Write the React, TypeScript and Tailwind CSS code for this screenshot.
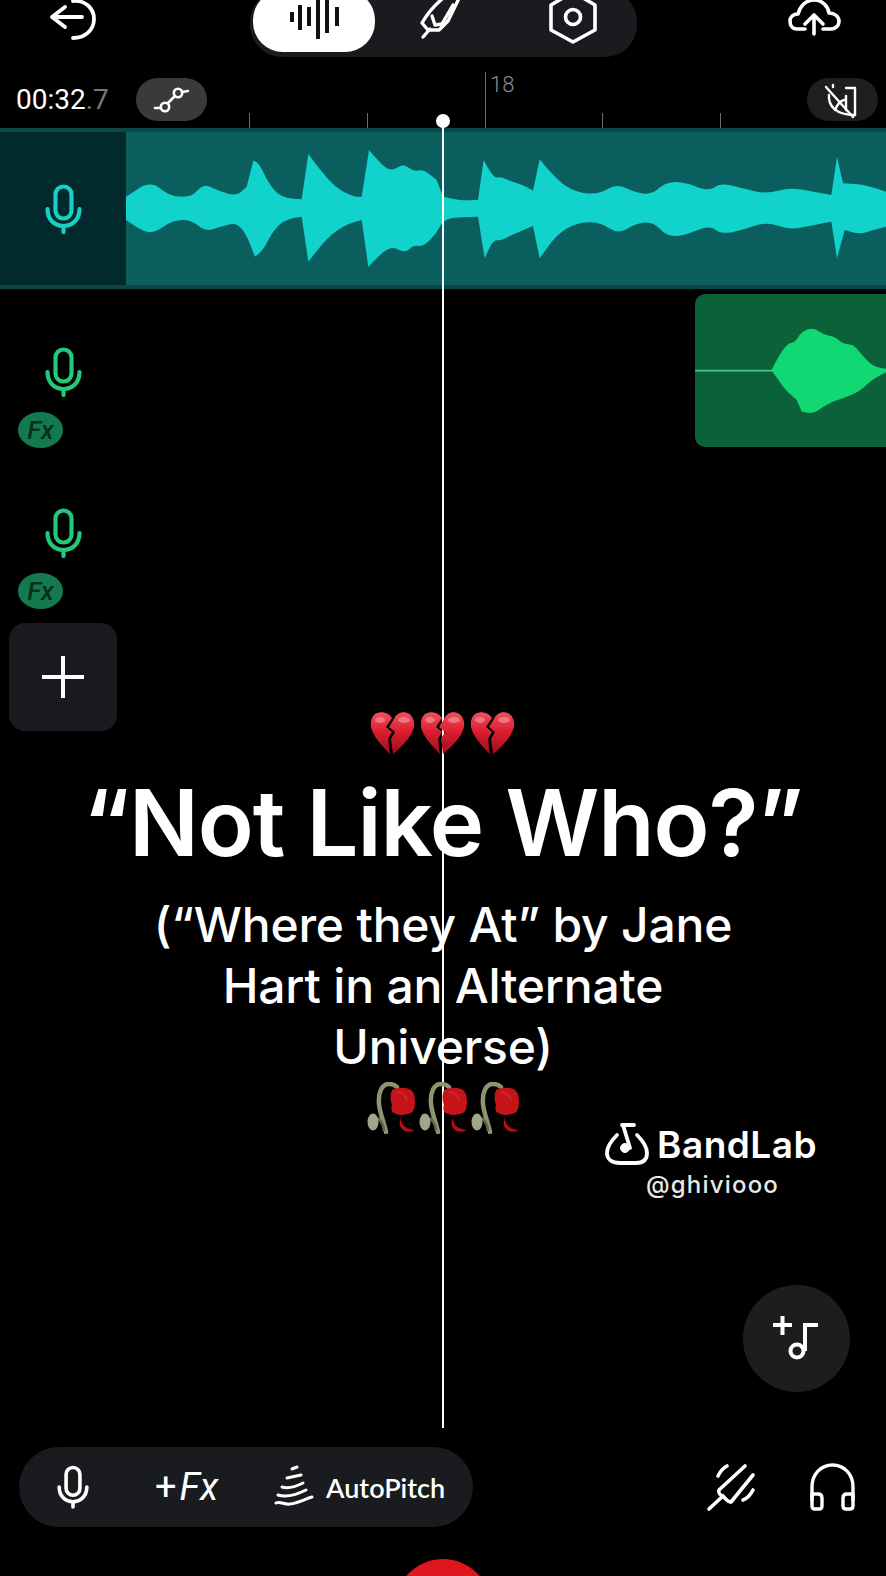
const wave1Top = [[378,590],[410,570],[430,555],[465,552],[490,575],[525,590],[575,590],[600,562],[620,555],[660,575],[710,588],[740,560],[760,482],[775,485],[800,540],[830,580],[860,595],[905,598],[925,462],[960,510],[1010,565],[1060,590],[1085,590],[1107,450],[1140,490],[1175,515],[1210,490],[1240,515],[1270,508],[1310,540],[1329,590],[1379,602],[1434,600],[1451,480],[1479,535],[1504,530],[1534,545],[1569,555],[1599,572],[1619,478],[1669,540],[1729,578],[1799,583],[1849,550],[1909,580],[1959,582],[1994,548],[2049,545],[2129,575],[2159,548],[2229,565],[2299,582],[2369,562],[2439,575],[2494,585],[2511,470],[2529,550],[2579,552],[2619,562],[2658,575]];
const wave1Bottom = [[378,660],[430,695],[465,698],[520,660],[575,660],[615,695],[660,680],[720,665],[745,720],[765,770],[790,750],[820,690],[860,655],[905,650],[925,785],[980,715],[1040,670],[1085,660],[1105,800],[1170,735],[1215,760],[1240,735],[1270,740],[1310,700],[1329,660],[1379,650],[1434,650],[1454,775],[1479,720],[1504,722],[1534,705],[1599,678],[1619,775],[1669,705],[1729,668],[1799,665],[1854,703],[1909,670],[1959,665],[1999,708],[2049,708],[2129,675],[2164,703],[2229,690],[2299,665],[2369,690],[2439,675],[2494,665],[2511,775],[2534,690],[2579,703],[2619,690],[2658,680]];
const wave2Top = [[275,255],[300,205],[325,175],[345,172],[365,140],[400,127],[430,150],[465,155],[490,178],[520,178],[550,215],[580,245],[618,252]];
const wave2Bottom = [[275,258],[295,285],[320,320],[350,345],[365,380],[400,388],[430,365],[460,350],[490,340],[540,320],[580,280],[618,262]];

// smooth the outline, but keep the transient spikes sharp
const smoothEdge = (pts: number[][], dir: number) => {
  let d = '';
  for (let i = 1; i < pts.length - 1; i++) {
    const [x, y] = pts[i];
    const [nx, ny] = pts[i + 1];
    const [px, py] = pts[i - 1];
    const spike = Math.abs(y - py) / Math.max((x - px) * dir, 1) > 2.2 || Math.abs(ny - y) / Math.max((nx - x) * dir, 1) > 2.2;
    d += spike ? `L${x} ${y}` : `Q${x} ${y} ${(x + nx) / 2} ${(y + ny) / 2}`;
  }
  return d;
};

const wavePath = (top: number[][], bottom: number[][]) => {
  const rev = [...bottom].reverse();
  const topEnd = top[top.length - 1];
  const revEnd = rev[rev.length - 1];
  return `M${top[0][0]} ${top[0][1]}${smoothEdge(top, 1)}L${topEnd[0]} ${topEnd[1]}L${rev[0][0]} ${rev[0][1]}${smoothEdge(rev, -1)}L${revEnd[0]} ${revEnd[1]}Z`;
};

const Mic = ({ className }: { className: string }) => (
  <svg viewBox="0 0 37 50" className={className} fill="none" stroke="currentColor" strokeWidth="4.2" strokeLinecap="round">
    <rect x="10.5" y="2.500" width="16" height="32" rx="8" />
    <path d="M2.500 25c0 10 6.500 17 16 17s16-7 16-17" />
    <path d="M18.500 42v6" />
  </svg>
);

const FxChip = () => (
  <div className="ml-[18px] mt-[15px] flex h-[36px] w-[45px] items-center justify-center rounded-[50%] bg-[#147a4e] text-[26px] font-medium italic leading-none text-[#07301e]">
    Fx
  </div>
);

const Tick = ({ className }: { className: string }) => (
  <div className={`h-[15px] w-px self-end bg-[#6b6b6b] ${className}`} />
);

const Heart = () => (
  <svg viewBox="0 0 44 43" className="h-[43px] w-[44px]">
    <defs>
      <linearGradient id="heartFill" x1="0" y1="0" x2="0" y2="1">
        <stop offset="0" stopColor="#f0505f" />
        <stop offset="0.45" stopColor="#dd1f30" />
        <stop offset="1" stopColor="#9c0d1c" />
      </linearGradient>
    </defs>
    <path fill="url(#heartFill)" d="M21 6C18 1 11-1 6 1 1 3-1 9 0 15c2 9 10 18 19 27l-2-15 4-7-6-5z" />
    <path fill="url(#heartFill)" d="M23 7l-5 8 6 5-4 7 2 15c9-7 19-18 21-27 1-7-2-13-8-14.500C30-.5 25 2 23 7z" />
    <ellipse cx="9" cy="8" rx="5" ry="3" fill="#fff" opacity=".3" />
    <ellipse cx="33" cy="8" rx="6" ry="3" fill="#fff" opacity=".3" />
  </svg>
);

const Rose = () => (
  <svg viewBox="0 0 50 52" className="h-[52px] w-[50px]" fill="none">
    <path d="M20 50C18 40 14 32 13 22 12 10 16 2 23 2c4 0 6 1 8 3" stroke="#8b9570" strokeWidth="4.500" strokeLinecap="round" />
    <path d="M12 36c4 4 6 8 6 13" stroke="#5f6a49" strokeWidth="2.500" />
    <ellipse cx="7" cy="40" rx="5.500" ry="8.500" fill="#a2a58b" />
    <path d="M26 8c6-3 14-3 19 0 3 2 4 7 4 12 0 5-1 9-4 11-5 2-12 3-17 0-3-1-3-5-2-8-2-5-2-10 0-15z" fill="#c5131a" />
    <path d="M30 10c6 0 10 3 11 9" stroke="#e0353a" strokeWidth="1.500" opacity=".6" />
    <path d="M35 36c0 6 4 11 13 12-1 2-9 3-12-1-3-3-3-8-1-11z" fill="#b31015" />
  </svg>
);

export default function App() {
  return (
    <div className="relative h-[1576px] w-[886px] overflow-hidden bg-black font-['Roboto',sans-serif] text-white">
      {/* top bar */}
      <div className="flex h-[78px] items-start">
        <svg viewBox="45 0 55 45" className="h-[45px] w-[55px] ml-[45px]" fill="none" stroke="#fff" strokeWidth="3.800" strokeLinecap="round" strokeLinejoin="round">
          <path d="M52 17h30M65 7 52 17l13 10" />
          <path d="M73 1c12-1 21 7 21 18 0 11-9 19-21 19" />
        </svg>
        <div className="ml-[150px] -mt-[10px] flex h-[67px] w-[387px] items-start rounded-[32px] bg-[#1a1b1e]">
          <div className="ml-[3px] h-[62px] w-[122px] rounded-[30px] bg-white">
            <svg viewBox="253 -10 122 62" className="h-[62px] w-[122px]" fill="#111">
              <rect x="290" y="12" width="4" height="10" />
              <rect x="298" y="5" width="4" height="25" />
              <rect x="307" y="7" width="4" height="19" />
              <rect x="316" y="-4" width="4" height="43" />
              <rect x="325" y="-4" width="4" height="37" />
              <rect x="335" y="7" width="4" height="19" />
            </svg>
          </div>
          <svg viewBox="418 -10 50 50" className="ml-[43px] h-[50px] w-[50px]" fill="none" stroke="#fff" strokeWidth="3.400" strokeLinecap="round" strokeLinejoin="round">
            <path d="M423 37l7-8" />
            <path d="M428 30l-6-7c5-9 12-17 20-24l22-11-16 33-9 9z" />
            <path d="M432 16l3 9 7-1" />
            <path d="M442 24l11-19" />
          </svg>
          <svg viewBox="545 -10 56 56" className="ml-[77px] h-[56px] w-[56px]" fill="none" stroke="#fff" strokeWidth="3.600" strokeLinejoin="round">
            <path d="M573-8 595 5v25L573 42 551 30V5z" />
            <circle cx="573" cy="17" r="7.500" />
          </svg>
        </div>
        <svg viewBox="785 0 60 40" className="ml-[148px] h-[40px] w-[60px]" fill="none" stroke="#fff" strokeWidth="3.600" strokeLinecap="round" strokeLinejoin="round">
          <path d="M805 29h-8c-5 0-7-4-7-8s3-7 8-7c2-8 8-14 16-14s14 6 15 13c6 0 10 4 10 8 0 5-4 8-8 8h-8" />
          <path d="M814 34V15M805 24l9-9 9 9" />
        </svg>
      </div>

      {/* ruler */}
      <div className="flex h-[50px] items-start pl-[16px]">
        <div className="flex h-[43px] w-[120px] items-center text-[28px] leading-none">
          00:32<span className="text-[#777]">.7</span>
        </div>
        <div className="h-[43px] w-[71px] rounded-[22px] bg-[#3a3a3c]">
          <svg viewBox="136 78 71 43" className="h-[43px] w-[71px]" fill="none" stroke="#fff" strokeWidth="2.600" strokeLinecap="round">
            <circle cx="165" cy="107" r="4.200" />
            <circle cx="178" cy="93" r="4.200" />
            <path d="M155 108h5M168 103l7-7M182 92l6-1" />
          </svg>
        </div>
        <Tick className="ml-[42px]" />
        <Tick className="ml-[117px]" />
        <div className="relative ml-[117px] h-[56px] w-px self-end bg-[#6b6b6b]">
          <span className="absolute left-[5px] top-[1px] text-[22px] font-light leading-[24px] text-[#8a8a8a]">18</span>
        </div>
        <Tick className="ml-[116px]" />
        <Tick className="ml-[117px]" />
        <div className="ml-[86px] h-[43px] w-[71px] rounded-[22px] bg-[#1e1f21]">
          <svg viewBox="807 78 71 43" className="h-[43px] w-[71px]" fill="none" stroke="#fff" strokeWidth="2.400" strokeLinecap="round">
            <path d="M826 87l27 30" />
            <path d="M829 95c-1 11 7 20 26 20" />
            <path d="M855 88v27M846 88h9M846 96v14M833 85v2" />
            <path d="M835 110c2-5 5-9 9-10" />
          </svg>
        </div>
      </div>

      {/* vocal track */}
      <div className="flex h-[161px] border-y-4 border-y-[#0a4746]">
        <div className="flex w-[126px] justify-center bg-[#02292b] pt-[52px]">
          <Mic className="h-[50px] w-[37px] text-[#17cfc4]" />
        </div>
        <div className="flex-1 bg-[#0a5f5e]">
          <svg viewBox="378 396 2280 459" preserveAspectRatio="none" className="h-full w-full">
            <path d={wavePath(wave1Top, wave1Bottom)} fill="#11d3cb" />
          </svg>
        </div>
      </div>

      {/* second track */}
      <div className="flex h-[160px]">
        <div className="w-[126px]">
          <div className="flex w-[126px] justify-center pt-[58px]">
            <Mic className="h-[50px] w-[37px] text-[#22c978]" />
          </div>
          <FxChip />
        </div>
        <div className="ml-auto mt-[5px] h-[153px] w-[191px] overflow-hidden rounded-l-[10px] bg-[#0b6138]">
          <svg viewBox="45 27 573 460" preserveAspectRatio="none" className="h-full w-full">
            <rect x="45" y="255" width="235" height="5" fill="#46c98a" />
            <path d={wavePath(wave2Top, wave2Bottom)} fill="#12d873" />
          </svg>
        </div>
      </div>

      {/* third track */}
      <div className="h-[158px] w-[126px]">
        <div className="flex w-[126px] justify-center pt-[59px]">
          <Mic className="h-[50px] w-[37px] text-[#22c978]" />
        </div>
        <FxChip />
      </div>

      <div className="ml-[9px] mt-[16px] flex h-[108px] w-[108px] items-center justify-center rounded-[16px] bg-[#1a1b1e]">
        <svg viewBox="0 0 42 42" className="h-[42px] w-[42px]" stroke="#fff" strokeWidth="4">
          <path d="M0 21h42M21 0v42" />
        </svg>
      </div>

      {/* add instrument */}
      <div className="ml-[743px] mt-[554px] flex h-[107px] w-[107px] items-center justify-center rounded-full bg-[#1c1d1f]">
        <svg viewBox="773 1316 47 46" className="h-[46px] w-[47px]" fill="none" stroke="#fff" strokeWidth="4">
          <path d="M773 1325h19M782.500 1316v19" />
          <path d="M805 1351v-26h13" />
          <circle cx="797" cy="1351" r="6.500" />
        </svg>
      </div>

      {/* bottom controls */}
      <div className="mt-[55px] flex h-[80px] items-center">
        <div className="ml-[19px] flex h-[80px] w-[454px] items-center rounded-[40px] bg-[#1a1b1e]">
          <Mic className="ml-[38px] h-[44px] w-[32px] text-white" />
          <div className="ml-[66px] flex w-[66px] items-baseline text-[38px] leading-none">
            <span>+</span>
            <span className="ml-[3px] italic">Fx</span>
          </div>
          <svg viewBox="273 1466 40 44" className="ml-[53px] h-[44px] w-[40px]" fill="none" stroke="#fff" strokeWidth="3" strokeLinecap="round">
            <path d="M291 1470l5-2" />
            <path d="M286 1479l14-3" />
            <path d="M281 1488c6 2 15-1 21-4" />
            <path d="M277 1496c9 3 20-1 28-5" />
            <path d="M275 1504c4-2 9 2 14 1 8-1 15-5 22-7" />
          </svg>
          <span className="ml-[12px] font-['Lato',sans-serif] text-[27px] font-semibold leading-none">AutoPitch</span>
        </div>
        <svg viewBox="705 1462 55 52" className="ml-[232px] h-[52px] w-[55px]" fill="none" stroke="#fff" strokeWidth="3.600" strokeLinecap="round" strokeLinejoin="round">
          <path d="M709 1510l14-13M719 1491l26-24M731 1503l22-27M719 1491c-1 3 1 5 4 6 2 2 4 6 8 6" />
          <path d="M718 1477c2-4 5-8 9-10M743 1501c5-2 8-6 10-10" />
        </svg>
        <svg viewBox="810 1462 46 48" className="ml-[50px] h-[48px] w-[46px]" fill="none" stroke="#fff" strokeWidth="3.400" strokeLinejoin="round">
          <path d="M812 1500v-14c0-13 9-22 20.500-22s20.500 9 20.500 22v14" />
          <path d="M812 1493h6c3 0 4 2 4 4v8c0 2-1 3-3 3h-4c-2 0-3-1-3-3z" />
          <path d="M853 1493h-6c-3 0-4 2-4 4v8c0 2 1 3 3 3h4c2 0 3-1 3-3z" />
        </svg>
      </div>

      {/* record button, cut off by the screen edge */}
      <div className="ml-[395px] mt-[32px] h-[96px] w-[96px] rounded-full bg-[#e0161e]" />

      {/* playhead */}
      <div className="absolute left-[442px] top-[120px] h-[1308px] w-[2px] bg-white" />
      <div className="absolute left-[436px] top-[114px] h-[14px] w-[14px] rounded-full bg-white" />

      {/* caption over the editor */}
      <div className="absolute inset-x-0 top-[712px] flex flex-col items-center font-['Inter',sans-serif]">
        <div className="flex gap-[6px]">
          <Heart />
          <Heart />
          <Heart />
        </div>
        <h1 className="mt-[13px] text-center text-[92px] font-semibold leading-[110px] tracking-[-1px]">“Not Like Who?”</h1>
        <p className="mt-[16px] w-[660px] text-center text-[48px] font-medium leading-[61px] tracking-[-0.2px]">
          (“Where they At” by Jane
          <br />
          Hart in an Alternate
          <br />
          Universe)
        </p>
        <div className="mt-[5px] flex gap-[2px]">
          <Rose />
          <Rose />
          <Rose />
        </div>
      </div>

      {/* watermark */}
      <div className="absolute left-[605px] top-[1122px] flex w-[240px] flex-col">
        <div className="flex items-center">
          <svg viewBox="605 1122 46 44" className="h-[44px] w-[46px]" fill="none" stroke="#fff" strokeWidth="3.800" strokeLinecap="round">
            <path d="M617 1135c-5 5-10 11-10 18 0 7 6 10 13 10h16c7 0 11-3 11-10 0-7-5-13-10-18" />
            <path d="M622 1125h12M623 1125l7 23" />
            <circle cx="625" cy="1148" r="4.500" fill="#fff" strokeWidth="1" />
          </svg>
          <span className="ml-[6px] font-['Inter',sans-serif] text-[37px] font-semibold leading-none tracking-[0.5px]">BandLab</span>
        </div>
        <span className="ml-[41px] mt-[4px] font-['Inter',sans-serif] text-[24px] font-medium leading-[30px] tracking-[1.2px] text-[#e8e8e8]">@ghiviooo</span>
      </div>
    </div>
  );
}
